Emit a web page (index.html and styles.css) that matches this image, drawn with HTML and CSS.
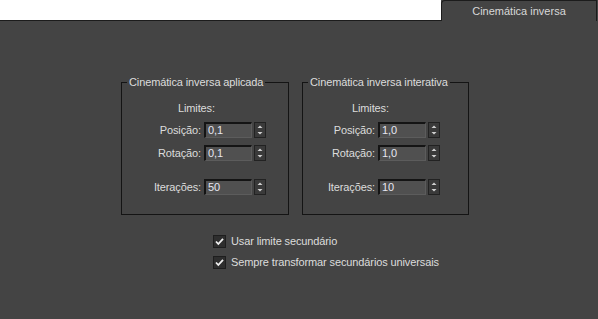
FILE: index.html
```html
<!DOCTYPE html>
<html>
<head>
<meta charset="utf-8">
<link rel="stylesheet" href="styles.css">
</head>
<body>
<div class="tabbar">
  <div class="tabstrip"></div>
  <div class="tab">Cinemática inversa</div>
</div>
<div class="content">
  <div class="groups">
    <fieldset class="group g1">
      <legend>Cinemática inversa aplicada</legend>
      <div class="limits">Limites:</div>
      <div class="row"><span class="lbl">Posição:</span><div class="field">0,1</div><div class="spin"><svg width="12" height="16" viewBox="0 0 12 16"><path d="M3.5 6 L6 3.5 L8.5 6 Z M3.5 10 L6 12.5 L8.5 10 Z" fill="#d0d0d0"/></svg></div></div>
      <div class="row"><span class="lbl">Rotação:</span><div class="field">0,1</div><div class="spin"><svg width="12" height="16" viewBox="0 0 12 16"><path d="M3.5 6 L6 3.5 L8.5 6 Z M3.5 10 L6 12.5 L8.5 10 Z" fill="#d0d0d0"/></svg></div></div>
      <div class="row iter"><span class="lbl">Iterações:</span><div class="field">50</div><div class="spin"><svg width="12" height="16" viewBox="0 0 12 16"><path d="M3.5 6 L6 3.5 L8.5 6 Z M3.5 10 L6 12.5 L8.5 10 Z" fill="#d0d0d0"/></svg></div></div>
    </fieldset>
    <fieldset class="group g2">
      <legend>Cinemática inversa interativa</legend>
      <div class="limits">Limites:</div>
      <div class="row"><span class="lbl">Posição:</span><div class="field">1,0</div><div class="spin"><svg width="12" height="16" viewBox="0 0 12 16"><path d="M3.5 6 L6 3.5 L8.5 6 Z M3.5 10 L6 12.5 L8.5 10 Z" fill="#d0d0d0"/></svg></div></div>
      <div class="row"><span class="lbl">Rotação:</span><div class="field">1,0</div><div class="spin"><svg width="12" height="16" viewBox="0 0 12 16"><path d="M3.5 6 L6 3.5 L8.5 6 Z M3.5 10 L6 12.5 L8.5 10 Z" fill="#d0d0d0"/></svg></div></div>
      <div class="row iter"><span class="lbl">Iterações:</span><div class="field">10</div><div class="spin"><svg width="12" height="16" viewBox="0 0 12 16"><path d="M3.5 6 L6 3.5 L8.5 6 Z M3.5 10 L6 12.5 L8.5 10 Z" fill="#d0d0d0"/></svg></div></div>
    </fieldset>
  </div>
  <div class="checks">
    <div class="check"><span class="box"><svg width="13" height="13" viewBox="0 0 13 13"><path d="M3 6.5 L5.3 9 L10 3.8" fill="none" stroke="#f0f0f0" stroke-width="1.8"/></svg></span><span>Usar limite secundário</span></div>
    <div class="check"><span class="box"><svg width="13" height="13" viewBox="0 0 13 13"><path d="M3 6.5 L5.3 9 L10 3.8" fill="none" stroke="#f0f0f0" stroke-width="1.8"/></svg></span><span>Sempre transformar secundários universais</span></div>
  </div>
</div>
</body>
</html>
```
FILE: styles.css
```css
html, body {
  margin: 0;
  padding: 0;
}
body {
  background: #444444;
  width: 598px;
  height: 319px;
  overflow: hidden;
  font-family: "Liberation Sans", Arial, sans-serif;
  font-size: 11px;
  color: #dcdcdc;
}
.tabbar {
  display: flex;
  height: 21px;
}
.tabstrip {
  flex: 1;
  background: #ffffff;
  border-bottom: 1px solid #1c1c1c;
}
.tab {
  width: 154px;
  background: #444444;
  border: 1px solid #1c1c1c;
  border-bottom: none;
  border-top-left-radius: 4px;
  margin-right: 1px;
  text-align: center;
  line-height: 20px;
  color: #d8d8d8;
}
.content {
  padding-top: 55px;
  letter-spacing: -0.12px;
}
.groups {
  display: flex;
  gap: 13px;
  padding-left: 121px;
}
.group {
  margin: 0;
  border: 1px solid #141414;
  padding: 0 0 19px 0;
  box-sizing: border-box;
  min-width: 0;
}
.g1 { width: 168px; padding-left: 27px; }
.g2 { width: 167px; padding-left: 20px; }
.group legend {
  padding: 0 2px;
  line-height: 13px;
  color: #dcdcdc;
}
.g1 legend { margin-left: -22px; }
.g2 legend { margin-left: -15px; }
.limits {
  margin-top: 13px;
  margin-left: 29px;
  line-height: 13px;
  margin-bottom: 7px;
}
.row {
  display: flex;
  align-items: center;
  height: 16px;
  margin-bottom: 7px;
}
.row.iter {
  margin-top: 18px;
  margin-bottom: 0;
}
.lbl {
  width: 52px;
  text-align: right;
  margin-right: 3px;
  white-space: nowrap;
}
.field {
  width: 48px;
  height: 16px;
  box-sizing: border-box;
  background: #505050;
  border-top: 2px solid #141414;
  border-left: 2px solid #141414;
  border-right: 1px solid #5c5c5c;
  border-bottom: 1px solid #5c5c5c;
  padding-left: 2px;
  line-height: 13px;
  color: #e6e6f0;
}
.spin {
  width: 12px;
  height: 16px;
  margin-left: 2px;
  box-sizing: border-box;
  background: #3a3a3a;
  border: 1px solid #222222;
  display: flex;
  align-items: center;
  justify-content: center;
}
.spin svg {
  display: block;
  flex: none;
}
.checks {
  padding-left: 213px;
  padding-top: 20px;
  display: flex;
  flex-direction: column;
  gap: 8px;
}
.check {
  display: flex;
  align-items: center;
  gap: 5px;
  height: 13px;
  line-height: 13px;
}
.box {
  width: 13px;
  height: 13px;
  box-sizing: border-box;
  background: #2e2e2e;
  border: 1px solid #1e1e1e;
  position: relative;
  display: block;
}
.box svg {
  position: absolute;
  left: -1px;
  top: -1px;
}
```
